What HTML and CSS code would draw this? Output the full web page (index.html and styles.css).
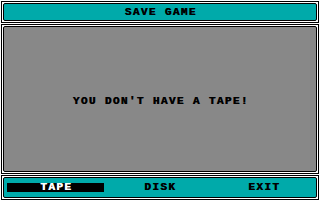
FILE: index.html
```html
<!DOCTYPE html>
<html>
<head>
<meta charset="utf-8">
<link rel="stylesheet" href="styles.css">
</head>
<body>
<div class="screen">
  <section class="frame frame-header">
    <div class="box box-teal header">SAVE GAME</div>
  </section>
  <section class="frame frame-main">
    <div class="box box-gray message">YOU DON'T HAVE A TAPE!</div>
  </section>
  <section class="frame frame-footer">
    <div class="box box-teal menu">
      <div class="item"><span class="label selected">TAPE</span></div>
      <div class="item"><span class="label">DISK</span></div>
      <div class="item"><span class="label">EXIT</span></div>
    </div>
  </section>
</div>
</body>
</html>
```
FILE: styles.css
```css
html, body {
  margin: 0;
  padding: 0;
  background: #ffffff;
}
.screen {
  width: 320px;
  height: 200px;
  box-sizing: border-box;
  padding: 1px 1px 0 1px;
  display: flex;
  flex-direction: column;
  gap: 1px;
  font-family: "Liberation Mono", "DejaVu Sans Mono", monospace;
  font-weight: bold;
  font-size: 11px;
  letter-spacing: 1.4px;
  color: #000000;
}
.frame {
  border: 1px solid #000000;
  padding: 1px;
  background: #ffffff;
  display: flex;
  box-sizing: border-box;
}
.frame-header { height: 22px; }
.frame-main { height: 150px; }
.frame-footer { height: 25px; }
.box {
  flex: 1;
  border: 1px solid #000000;
  border-radius: 2px;
  display: flex;
  align-items: center;
  justify-content: center;
}
.box-teal { background: #00aaaa; }
.box-gray { background: #888888; }
.header, .message, .label {
  text-shadow: 0.6px 0 0 currentColor;
}
.header { padding-left: 1.4px; line-height: 16px; }
.message { padding-top: 3px; padding-left: 1.4px; }
.menu {
  display: grid;
  grid-template-columns: repeat(3, 1fr);
}
.item {
  display: flex;
  align-items: stretch;
  padding: 5px 4px 5px 3px;
}
.label {
  flex: 1;
  display: flex;
  align-items: center;
  justify-content: center;
  padding-left: 1.4px;
  line-height: 9px;
}
.selected {
  background: #000000;
  color: #ffffff;
}
```
